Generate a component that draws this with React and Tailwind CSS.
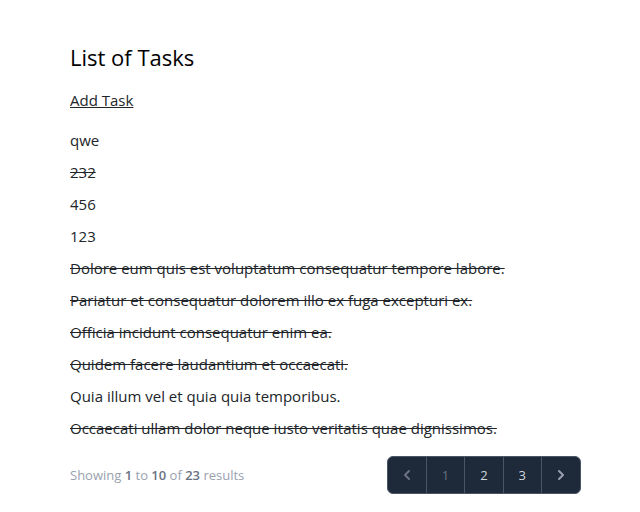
const tasks = [
  { title: 'qwe', done: false },
  { title: '232', done: true },
  { title: '456', done: false },
  { title: '123', done: false },
  { title: 'Dolore eum quis est voluptatum consequatur tempore labore.', done: true },
  { title: 'Pariatur et consequatur dolorem illo ex fuga excepturi ex.', done: true },
  { title: 'Officia incidunt consequatur enim ea.', done: true },
  { title: 'Quidem facere laudantium et occaecati.', done: true },
  { title: 'Quia illum vel et quia quia temporibus.', done: false },
  { title: 'Occaecati ullam dolor neque iusto veritatis quae dignissimos.', done: true },
];

function Chevron({ dir }) {
  return (
    <svg viewBox="0 0 20 20" fill="currentColor" className="h-5 w-5">
      {dir === 'left' ? (
        <path fillRule="evenodd" d="M12.707 5.293a1 1 0 010 1.414L9.414 10l3.293 3.293a1 1 0 01-1.414 1.414l-4-4a1 1 0 010-1.414l4-4a1 1 0 011.414 0z" clipRule="evenodd" />
      ) : (
        <path fillRule="evenodd" d="M7.293 14.707a1 1 0 010-1.414L10.586 10 7.293 6.707a1 1 0 011.414-1.414l4 4a1 1 0 010 1.414l-4 4a1 1 0 01-1.414 0z" clipRule="evenodd" />
      )}
    </svg>
  );
}

export default function App() {
  return (
    <div className="min-h-screen bg-white font-['Open_Sans',sans-serif] text-[#212529]">
      <div className="w-[511px] pl-[70px] pt-[42px] box-content">
        <h1 className="text-[22px] leading-[30px] text-black">List of Tasks</h1>
        <a href="#" className="mt-[16px] inline-block text-[15px] leading-6 text-[#212529] underline">Add Task</a>
        <div className="mt-[16px] flex flex-col gap-2">
          {tasks.map((t) => (
            <div key={t.title} className={'text-[15px] leading-6 ' + (t.done ? 'line-through' : '')}>
              {t.title}
            </div>
          ))}
        </div>
        <div className="mt-[16px] flex items-center justify-between">
          <p className="text-[13px] leading-5 text-gray-400">
            Showing <span className="font-semibold text-gray-500">1</span> to <span className="font-semibold text-gray-500">10</span> of <span className="font-semibold text-gray-500">23</span> results
          </p>
          <div className="flex rounded-md border border-gray-600 bg-gray-800 text-[13px] leading-5">
            <span className="flex items-center px-[9px] py-2 text-gray-500"><Chevron dir="left" /></span>
            <span className="border-l border-gray-600 px-[15px] py-2 text-gray-500">1</span>
            <span className="border-l border-gray-600 px-[15px] py-2 font-medium text-gray-300">2</span>
            <span className="border-l border-gray-600 px-[15px] py-2 font-medium text-gray-300">3</span>
            <span className="flex items-center border-l border-gray-600 px-[9px] py-2 text-gray-400"><Chevron dir="right" /></span>
          </div>
        </div>
      </div>
    </div>
  );
}
